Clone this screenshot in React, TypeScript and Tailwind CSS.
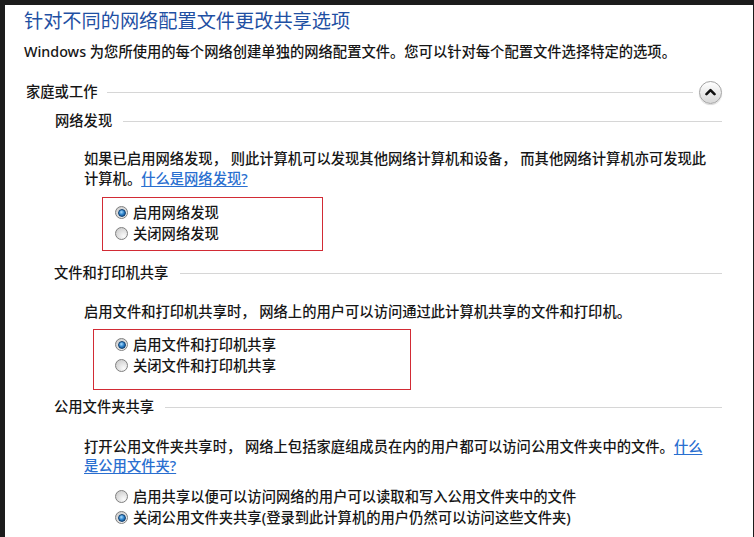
import React from "react";

function Radio({ checked }: { checked?: boolean }) {
  return (
    <span className="flex h-[13px] w-[13px] shrink-0 items-center justify-center rounded-full border border-[#7f7f7f] bg-[radial-gradient(circle_at_70%_75%,#fbfbfb,#c4c4c4)]">
      {checked && (
        <span className="h-[8px] w-[8px] rounded-full border border-[#0f3f70] bg-[radial-gradient(circle_at_40%_35%,#a8dcff,#2a7fc8_50%,#0d3f75)]" />
      )}
    </span>
  );
}

function RadioRow({ checked, label }: { checked?: boolean; label: string }) {
  return (
    <div className="flex h-[21px] items-center gap-[5px] whitespace-nowrap">
      <Radio checked={checked} />
      <span>{label}</span>
    </div>
  );
}

function Comma() {
  return <span className="inline-block w-[18px]">，</span>;
}

function Header({ label, pl, ml }: { label: string; pl: string; ml: string }) {
  return (
    <div className={`flex h-[28px] items-center ${pl}`}>
      <span className="whitespace-nowrap">{label}</span>
      <div className={`h-px flex-1 bg-[#d6d6d6] ${ml}`} />
    </div>
  );
}

export default function App() {
  return (
    <div
      className="h-[537px] w-[754px] overflow-hidden bg-[#1c1c1c] pl-[5px] pr-[1px] pt-[5px]"
      style={{ fontFamily: '"Noto Sans", "Noto Sans CJK SC", sans-serif' }}
    >
      <div className="h-[532px] bg-white pl-[19px] text-[14.3px] font-medium leading-[20px] text-[#161616]">
        <div className="w-[698px]">
          <div className="flex h-[32px] items-center whitespace-nowrap text-[19.2px] font-normal text-[#1f50a3]">
            针对不同的网络配置文件更改共享选项
          </div>
          <div className="flex h-[30px] items-center whitespace-nowrap">
            Windows 为您所使用的每个网络创建单独的网络配置文件。您可以针对每个配置文件选择特定的选项。
          </div>

          <div className="mt-[10px] flex h-[30px] items-center pl-[2px]">
            <span className="whitespace-nowrap">家庭或工作</span>
            <div className="ml-[10px] h-px flex-1 bg-[#d6d6d6]" />
            <div className="ml-[6px] flex h-[23px] w-[23px] items-center justify-center rounded-full border border-[#a3a3a3] bg-gradient-to-b from-white to-[#d8d8d8] shadow-[0_1px_1px_rgba(0,0,0,0.15)]">
              <svg width="11" height="8" viewBox="0 0 11 8">
                <path d="M1.5 6.2 L5.5 2.2 L9.5 6.2" fill="none" stroke="#111" strokeWidth="2.6" strokeLinecap="round" strokeLinejoin="round" />
              </svg>
            </div>
          </div>

          <Header label="网络发现" pl="pl-[31px]" ml="ml-[11px]" />

          <div className="mt-[14px] whitespace-nowrap pl-[60px]">
            如果已启用网络发现<Comma />则此计算机可以发现其他网络计算机和设备<Comma />而其他网络计算机亦可发现此
            <br />
            计算机。<span className="text-[#2a6fd0] underline underline-offset-2">什么是网络发现?</span>
          </div>

          <div className="ml-[78px] mt-[8px] h-[54px] w-[221px] border border-[#d22b35] pl-[12px] pt-[4px]">
            <RadioRow checked label="启用网络发现" />
            <RadioRow label="关闭网络发现" />
          </div>

          <div className="mt-[8px]">
            <Header label="文件和打印机共享" pl="pl-[30px]" ml="ml-[12px]" />
          </div>

          <div className="mt-[15px] whitespace-nowrap pl-[60px]">
            启用文件和打印机共享时<Comma />网络上的用户可以访问通过此计算机共享的文件和打印机。
          </div>

          <div className="ml-[69px] mt-[7px] h-[61px] w-[318px] border border-[#d22b35] pl-[21px] pt-[4px]">
            <RadioRow checked label="启用文件和打印机共享" />
            <RadioRow label="关闭文件和打印机共享" />
          </div>

          <div className="mt-[3px]">
            <Header label="公用文件夹共享" pl="pl-[30px]" ml="ml-[11px]" />
          </div>

          <div className="mt-[16px] whitespace-nowrap pl-[60px] leading-[19px]">
            打开公用文件夹共享时<Comma />网络上包括家庭组成员在内的用户都可以访问公用文件夹中的文件。
            <span className="text-[#2a6fd0] underline underline-offset-2">
              什么
              <br />
              是公用文件夹?
            </span>
          </div>

          <div className="mt-[11px] pl-[91px]">
            <RadioRow label="启用共享以便可以访问网络的用户可以读取和写入公用文件夹中的文件" />
            <RadioRow checked label="关闭公用文件夹共享(登录到此计算机的用户仍然可以访问这些文件夹)" />
          </div>
        </div>
      </div>
    </div>
  );
}
